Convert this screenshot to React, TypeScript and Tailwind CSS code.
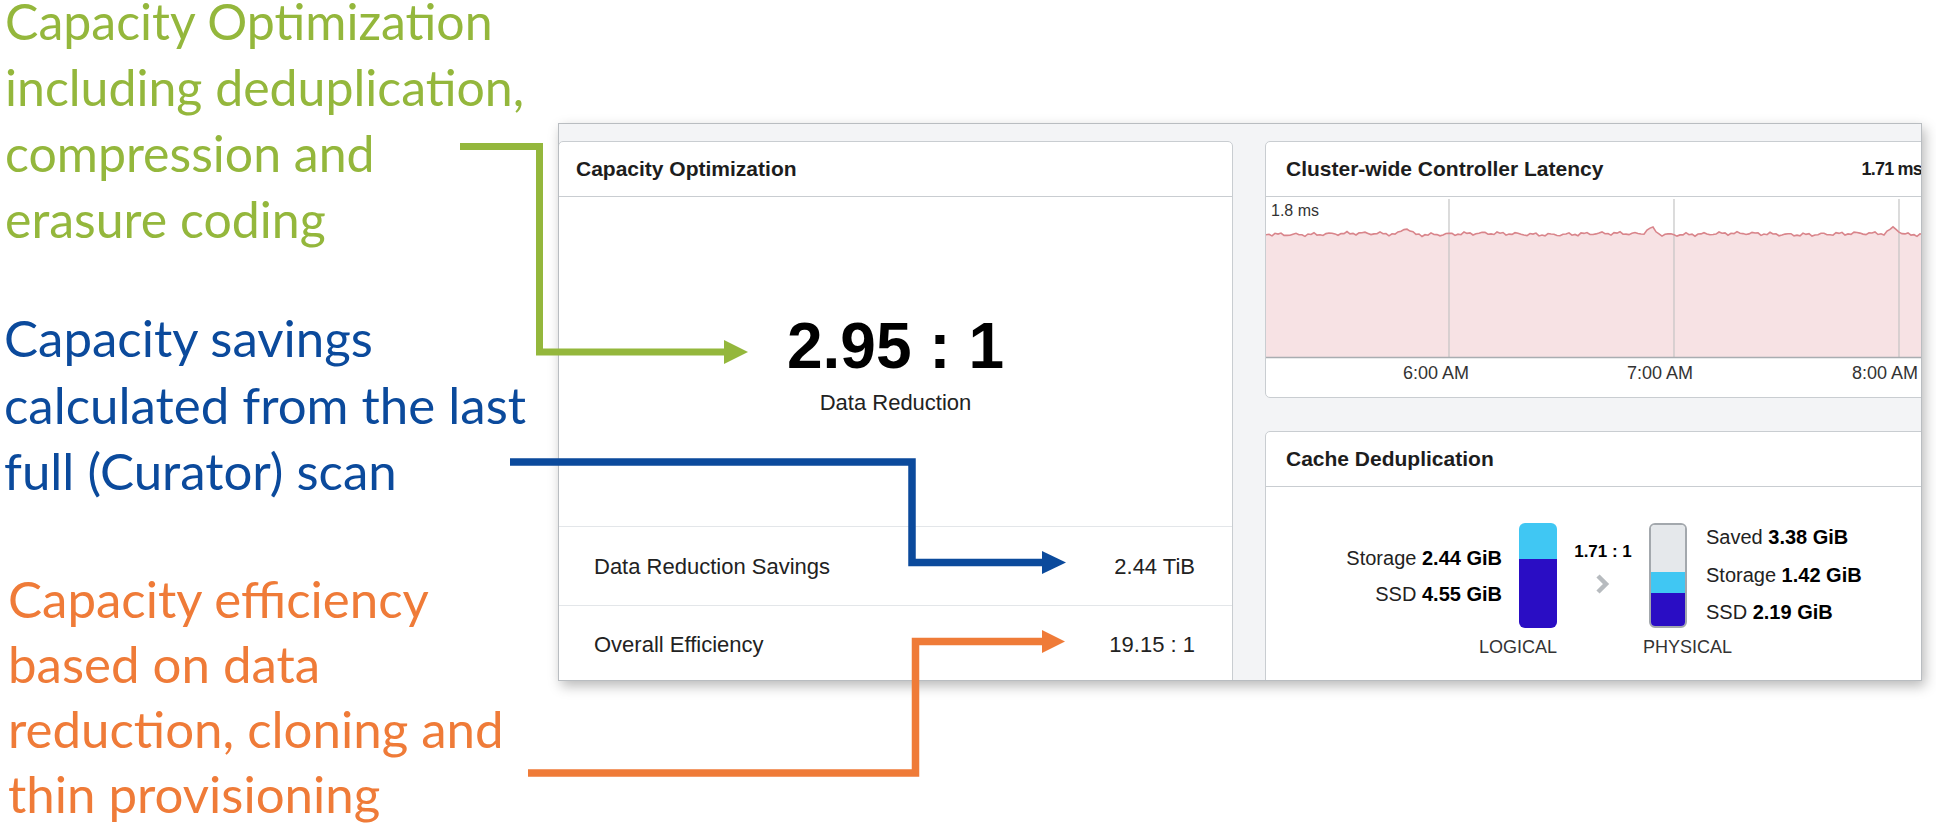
const chartLine = (() => {
  const pts: string[] = []
  for (let x = 0; x <= 672; x += 3) {
    let y = 37 + 1.1 * Math.sin(x * 0.37) + 0.8 * Math.sin(x * 1.13 + 1) + 0.7 * Math.sin(x * 0.05)
    for (const p of [140, 385, 628]) y -= 7 * Math.max(0, 1 - Math.abs(x - p) / 9)
    pts.push(`${x},${y.toFixed(1)}`)
  }
  return pts
})()

function LatencyChart() {
  const line = "M" + chartLine.join(" L")
  const area = line + " L672,160 L0,160 Z"
  return (
    <svg width="672" height="201" className="block">
      <path d={area} fill="#f7e2e4" />
      {[183, 408, 633].map((x) => (
        <line key={x} x1={x} x2={x} y1="2" y2="160" stroke="#c4c4c4" strokeWidth="1.2" />
      ))}
      <path d={line} fill="none" stroke="#d9858b" strokeWidth="1.6" />
      <line x1="0" x2="672" y1="160.5" y2="160.5" stroke="#a9adb1" strokeWidth="1.5" />
      <text x="5" y="19" fontSize="16" fill="#333" fontFamily="Liberation Sans, sans-serif">1.8 ms</text>
      {[
        [170, "6:00 AM"],
        [394, "7:00 AM"],
        [619, "8:00 AM"],
      ].map(([x, t]) => (
        <text key={t} x={x} y="182" fontSize="18" fill="#333" textAnchor="middle" fontFamily="Liberation Sans, sans-serif">
          {t}
        </text>
      ))}
    </svg>
  )
}

function Connectors() {
  return (
    <svg width="1936" height="829" className="absolute inset-0 pointer-events-none">
      <path d="M460,146.5 H539.5 V352 H727" fill="none" stroke="#94b73c" strokeWidth="7" />
      <polygon points="724,340 748,352 724,364" fill="#94b73c" />
      <path d="M510,462 H912 V562.5 H1044" fill="none" stroke="#0b4a9c" strokeWidth="7.5" />
      <polygon points="1042,551 1066,562.5 1042,574" fill="#0b4a9c" />
      <path d="M528,773 H915.5 V641.5 H1044" fill="none" stroke="#ef7b38" strokeWidth="7.5" />
      <polygon points="1042,630 1065,641.5 1042,653" fill="#ef7b38" />
    </svg>
  )
}

export default function App() {
  return (
    <div className="relative w-[1936px] h-[829px] overflow-hidden bg-white flex">
      {/* annotations */}
      <div className="w-[558px] shrink-0 flex flex-col font-['Lato',sans-serif] whitespace-nowrap">
        <div className="pl-[5px] text-[50px] leading-[66px] text-[#94b73c]">
          <div className="leading-[42px] mb-[12px]">Capacity Optimization</div>
          <div>including deduplication,</div>
          <div>compression and</div>
          <div>erasure coding</div>
        </div>
        <div className="mt-[53px] pl-[4px] text-[51px] leading-[66.5px] text-[#0b4a9c]">
          <div>Capacity savings</div>
          <div>calculated from the last</div>
          <div>full (Curator) scan</div>
        </div>
        <div className="mt-[61px] pl-[8px] text-[51px] leading-[65px] text-[#ef7b38]">
          <div>Capacity efficiency</div>
          <div>based on data</div>
          <div>reduction, cloning and</div>
          <div>thin provisioning</div>
        </div>
      </div>

      {/* dashboard screenshot */}
      <div className="pt-[123px]">
        <div className="w-[1364px] h-[558px] border border-[#b9bdc1] bg-[#f3f4f6] overflow-hidden shadow-[3px_5px_12px_rgba(0,0,0,0.28)] font-['Liberation_Sans',sans-serif] text-[#1d1d1d]">
          <div className="flex gap-[32px] pt-[17px] -ml-px">
            {/* Capacity Optimization */}
            <div className="w-[675px] h-[545px] shrink-0 bg-white border border-[#c9cdd1] rounded-[5px] flex flex-col">
              <div className="h-[55px] shrink-0 border-b border-[#c9cdd1] flex items-center px-[17px] text-[21px] font-bold">
                Capacity Optimization
              </div>
              <div className="h-[329px] shrink-0 flex flex-col items-center pt-[117px]">
                <div className="text-[64px] leading-[64px] font-bold text-black">2.95 : 1</div>
                <div className="mt-[11px] text-[22px] leading-[28px] text-[#222]">Data Reduction</div>
              </div>
              <div className="h-[79px] shrink-0 border-t border-[#e3e6e9] flex items-center justify-between pl-[35px] pr-[37px] text-[22px] text-[#222]">
                <span>Data Reduction Savings</span>
                <span>2.44 TiB</span>
              </div>
              <div className="h-[78px] shrink-0 border-t border-[#e3e6e9] flex items-center justify-between pl-[35px] pr-[37px] text-[22px] text-[#222]">
                <span>Overall Efficiency</span>
                <span>19.15 : 1</span>
              </div>
            </div>

            <div className="w-[674px] shrink-0 flex flex-col gap-[33px]">
              {/* latency */}
              <div className="h-[257px] bg-white border border-[#c9cdd1] rounded-[5px] flex flex-col overflow-hidden">
                <div className="h-[55px] shrink-0 border-b border-[#c9cdd1] flex items-center justify-between pl-[20px] pr-[16px]">
                  <span className="text-[21px] font-bold">Cluster-wide Controller Latency</span>
                  <span className="text-[18px] font-bold tracking-[-0.8px]">1.71 ms</span>
                </div>
                <LatencyChart />
              </div>

              {/* cache dedup */}
              <div className="h-[300px] bg-white border border-[#c9cdd1] rounded-[5px] flex flex-col">
                <div className="h-[55px] shrink-0 border-b border-[#c9cdd1] flex items-center pl-[20px] text-[21px] font-bold">
                  Cache Deduplication
                </div>
                <div className="flex pt-[36px] text-[20px] text-[#222]">
                  <div className="w-[236px] h-[105px] shrink-0 flex flex-col justify-center items-end leading-[36px]">
                    <div>
                      Storage <b className="text-black">2.44 GiB</b>
                    </div>
                    <div>
                      SSD <b className="text-black">4.55 GiB</b>
                    </div>
                  </div>
                  <div className="ml-[17px] w-[38px] shrink-0 flex flex-col items-end">
                    <div className="w-[38px] h-[105px] rounded-[6px] overflow-hidden flex flex-col">
                      <div className="h-[36px] bg-[#40c7f3]" />
                      <div className="flex-1 bg-[#2a0dc4]" />
                    </div>
                    <div className="mt-[6px] text-[18px] leading-[26px] whitespace-nowrap text-[#333]">LOGICAL</div>
                  </div>
                  <div className="w-[92px] shrink-0 flex flex-col items-center pt-[17px]">
                    <div className="text-[17px] font-bold leading-[24px] text-black">1.71 : 1</div>
                    <svg width="16" height="22" className="mt-[9px] ml-[-2px]">
                      <polyline points="4,3 12,11 4,19" fill="none" stroke="#b7bbbf" strokeWidth="4.5" />
                    </svg>
                  </div>
                  <div className="w-[38px] shrink-0 flex flex-col items-start">
                    <div className="w-[38px] h-[105px] rounded-[6px] overflow-hidden flex flex-col border-2 border-[#a3a8ad]">
                      <div className="h-[47px] bg-[#e5e8eb]" />
                      <div className="h-[21px] bg-[#40c7f3]" />
                      <div className="flex-1 bg-[#2a0dc4]" />
                    </div>
                    <div className="mt-[6px] -ml-[6px] text-[18px] leading-[26px] whitespace-nowrap text-[#333]">PHYSICAL</div>
                  </div>
                  <div className="ml-[19px] h-[105px] flex flex-col justify-center leading-[37.5px] whitespace-nowrap">
                    <div>
                      Saved <b className="text-black">3.38 GiB</b>
                    </div>
                    <div>
                      Storage <b className="text-black">1.42 GiB</b>
                    </div>
                    <div>
                      SSD <b className="text-black">2.19 GiB</b>
                    </div>
                  </div>
                </div>
              </div>
            </div>
          </div>
        </div>
      </div>

      <Connectors />
    </div>
  )
}
